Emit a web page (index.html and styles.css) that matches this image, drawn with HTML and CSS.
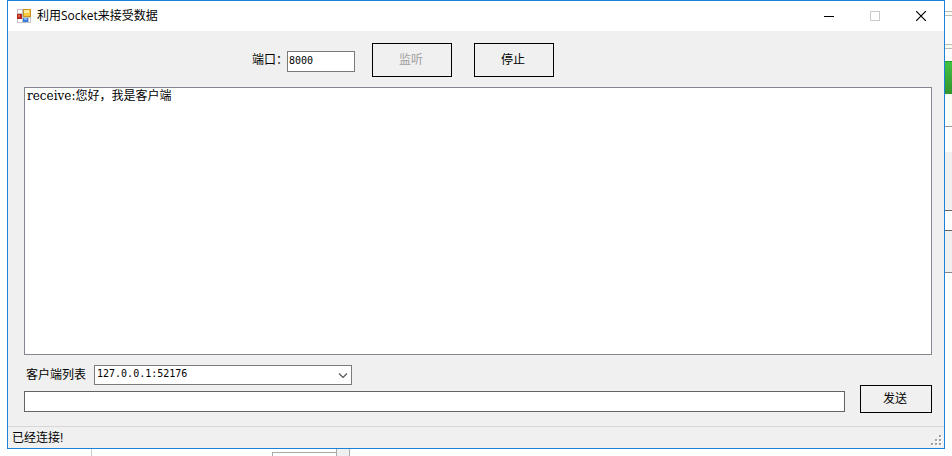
FILE: index.html
```html
<!DOCTYPE html>
<html lang="zh-CN">
<head>
<meta charset="utf-8">
<title>利用Socket来接受数据</title>
<link rel="stylesheet" href="styles.css">
</head>
<body>
<div class="desktop">
  <main class="window">
    <header class="titlebar">
      <svg class="app-icon" width="14" height="14" viewBox="0 0 14 14" shape-rendering="crispEdges" aria-hidden="true">
        <path fill="#c0c2c5" d="M0 0h14v14H0z"/>
        <path fill="#fff" d="M1 1h4v3H1zM1 10h4v3H1zM12 9h1v4h-1z"/>
        <path fill="#b3261e" d="M0 5h5v5H0z"/><path fill="#e8604c" d="M1 6h2v2H1z"/>
        <path fill="#c9951a" d="M6 0h8v8H6z"/><path fill="#fdc93f" d="M7 1h6v6H7z"/><path fill="#ffeaa0" d="M7 1h5v3H7z"/>
        <path fill="#3b78dc" d="M6 9h5v4H6z"/><path fill="#7db4fb" d="M7 9h3v2H7z"/>
      </svg>
      <h1 class="title">利用Socket来接受数据</h1>
      <button class="caption-button" type="button" aria-label="最小化">
        <svg width="10" height="10" viewBox="0 0 10 10" shape-rendering="crispEdges"><path d="M0 5h10v1H0z"/></svg>
      </button>
      <button class="caption-button" type="button" aria-label="最大化" disabled>
        <svg width="10" height="10" viewBox="0 0 10 10" shape-rendering="crispEdges"><path fill="none" stroke="#ccc" d="M.5.5h9v9h-9z"/></svg>
      </button>
      <button class="caption-button" type="button" aria-label="关闭">
        <svg width="10" height="10" viewBox="0 0 10 10"><path fill="none" stroke="#000" stroke-width="1.2" d="M0 0l10 10M10 0L0 10"/></svg>
      </button>
    </header>
    <div class="content">
      <div class="toolbar">
        <label for="port">端口：</label>
        <input class="field port" id="port" type="text" value="8000">
        <button class="button listen" type="button" disabled>监听</button>
        <button class="button" type="button">停止</button>
      </div>
      <textarea class="log" aria-label="接收数据" spellcheck="false">receive:您好，我是客户端</textarea>
      <div class="sender">
        <div class="sender-fields">
          <div class="client-row">
            <label for="client">客户端列表</label>
            <div class="select-wrap">
              <select class="field client" id="client"><option>127.0.0.1:52176</option></select>
              <svg class="chevron" width="10" height="6" viewBox="0 0 10 6" aria-hidden="true"><path fill="none" stroke="#555" stroke-width="1.2" d="M1 .5l4 4 4-4"/></svg>
            </div>
          </div>
          <input class="field message" type="text" aria-label="消息">
        </div>
        <button class="button send" type="button">发送</button>
      </div>
    </div>
    <footer class="statusbar">
      <span>已经连接!</span>
      <svg class="grip" width="12" height="12" viewBox="0 0 12 12" shape-rendering="crispEdges" aria-hidden="true">
        <path fill="#fff" d="M9 1h2v2H9zM5 5h2v2H5zM9 5h2v2H9zM1 9h2v2H1zM5 9h2v2H5zM9 9h2v2H9z"/>
        <path fill="#a0a0a0" d="M8 0h2v2H8zM4 4h2v2H4zM8 4h2v2H8zM0 8h2v2H0zM4 8h2v2H4zM8 8h2v2H8z"/>
      </svg>
    </footer>
  </main>
  <div class="back-side" aria-hidden="true">
    <div class="back-tab"></div>
    <div class="back-search"></div>
    <div class="back-green"></div>
    <div class="back-pale"></div>
    <div class="back-panel"></div>
    <div class="back-row"></div>
  </div>
  <div class="back-bottom" aria-hidden="true">
    <div class="back-divider"></div>
    <div class="back-box"></div>
    <div class="back-scroll"></div>
  </div>
</div>
</body>
</html>
```

FILE: styles.css
```css
* { box-sizing: border-box; }

body {
  margin: 0;
  background: #fff;
  color: #000;
  font: 12px/16px "Liberation Sans", "Noto Sans CJK SC", sans-serif;
}

button, input, select, textarea {
  font: inherit;
  color: inherit;
  border-radius: 0;
  margin: 0;
}

.desktop {
  display: grid;
  grid-template: minmax(0, 1fr) 7px / 7px minmax(0, 1fr) 7px;
  height: 100vh;
  min-height: 300px;
}

.window {
  grid-area: 1 / 2;
  display: flex;
  flex-direction: column;
  border: 1px solid #1a82d9;
  background: #f0f0f0;
}

.titlebar {
  display: flex;
  align-items: center;
  height: 30px;
  padding-left: 9px;
  background: #fff;
}

.title {
  flex: 1;
  margin: 0 0 0 6px;
  font: 12px/16px "Open Sans", "Noto Sans CJK SC", sans-serif;
}

.caption-button {
  display: grid;
  place-items: center;
  width: 46px;
  height: 28px;
  padding: 0;
  border: 0;
  background: none;
}

.content {
  flex: 1;
  display: flex;
  flex-direction: column;
  min-height: 0;
  padding: 12px 12px 13px 16px;
}

.toolbar {
  display: flex;
  align-items: center;
  height: 34px;
  margin: 0 0 10px 228px;
}

.field {
  border: 1px solid #7a7a7a;
  background: #fff;
  font: 10px/16px "DejaVu Sans Mono", "Noto Sans CJK SC", monospace;
}

.port {
  width: 68px;
  height: 21px;
  margin: 2px 17px 0 0;
  padding: 0 1px 2px;
}

.toolbar label { width: 35px; white-space: nowrap; }

.button {
  width: 80px;
  height: 34px;
  padding: 0 2px 0 0;
  border: 1px solid #000;
  background: #f0f0f0;
}

.button:disabled { color: #a0a0a0; }

.listen { margin-right: 22px; }

.log {
  flex: 1;
  display: block;
  width: 100%;
  min-height: 0;
  padding: 0 2px;
  border: 1px solid #828790;
  background: #fff;
  outline: 0;
  resize: none;
  font: 12px/16px "DejaVu Serif", "Noto Sans CJK SC", serif;
}

.sender {
  display: flex;
  align-items: flex-end;
  gap: 15px;
  padding-top: 10px;
}

.sender-fields { flex: 1; padding-bottom: 1px; }

.client-row {
  display: flex;
  align-items: center;
  gap: 8px;
  margin-bottom: 6px;
  padding-left: 2px;
}

.select-wrap { position: relative; width: 258px; }

.client {
  display: block;
  width: 100%;
  height: 20px;
  padding: 0 2px 2px;
  appearance: none;
}

.chevron {
  position: absolute;
  top: 8px;
  right: 4px;
  pointer-events: none;
}

.message {
  display: block;
  width: 100%;
  height: 21px;
  border-color: #646464;
}

.send { width: 72px; height: 28px; }

.statusbar {
  display: flex;
  justify-content: space-between;
  align-items: center;
  height: 22px;
  padding: 0 1px 0 4px;
  border-top: 1px solid #d7d7d7;
}

.grip { align-self: flex-end; margin-bottom: 1px; }

.back-side {
  grid-area: 1 / 3;
  display: flex;
  flex-direction: column;
  padding-top: 11px;
}

.back-tab { height: 5px; border: solid #bbb; border-width: 1px 0; background: #f5fbef; }
.back-search { height: 5px; margin: 28px 0 12px; border: solid #bbb; border-width: 1px 0; background: #f5fbef; }
.back-green { height: 33px; border-top: 1px solid #269a2b; background: linear-gradient(#43c143, #32952f); }
.back-pale { height: 33px; margin-bottom: 25px; border-bottom: 1px solid #999; background: #fafffa; }
.back-panel { height: 59px; margin-bottom: 19px; border-bottom: 1px solid #646464; background: #f0f0f0; }
.back-row { height: 43px; border: solid #828790; border-width: 1px 0; border-top-color: #646464; background: #f0f0f0; }

.back-bottom {
  grid-area: 2 / 1 / 3 / 4;
  display: flex;
  padding-left: 91px;
}

.back-divider { width: 1px; margin-right: 180px; background: #ccc; }
.back-box { width: 64px; margin-top: 3px; border: solid #aaa; border-width: 1px 0 0 1px; }
.back-scroll { width: 14px; border: solid #aaa; border-width: 0 1px; background: #f0f0f0; }
```
